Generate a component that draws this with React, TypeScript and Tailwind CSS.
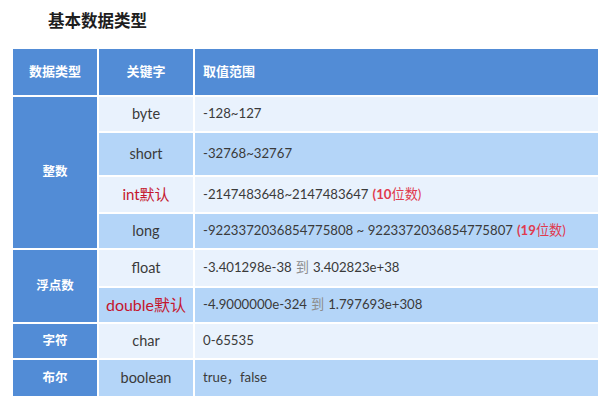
import React from 'react';

const font = { fontFamily: 'Lato, "Noto Sans CJK SC", sans-serif' };

const light = 'bg-[#e9f2fd]';
const mid = 'bg-[#b4d5f8]';

const Key: React.FC<{ bg: string; children: React.ReactNode; className?: string }> = ({ bg, children, className }) => (
  <div className={`${bg} flex items-center justify-center text-[14.5px] text-[#3a3a3a] ${className ?? ''}`}>{children}</div>
);

const Val: React.FC<{ bg: string; children: React.ReactNode }> = ({ bg, children }) => (
  <div className={`${bg} flex items-center pl-[8px] text-[13.2px] text-[#3a3a3a]`}>{children}</div>
);

const Group: React.FC<{ span: string; children: React.ReactNode }> = ({ span, children }) => (
  <div className={`${span} bg-[#528cd6] flex items-center justify-center text-[12.5px] font-bold text-white`}>{children}</div>
);

const To = () => <span className="mx-[4px] text-[#8c8c8c]">到</span>;

const App: React.FC = () => {
  return (
    <div className="w-[601px] h-[396px] bg-white overflow-hidden" style={font}>
      {/* Title */}
      <div className="pl-[48px] pt-[10px] text-[16.5px] leading-[22px] font-bold text-[#1e1e1e]">基本数据类型</div>

      {/* Table */}
      <div className="mt-[17px] ml-[13px] w-[585px] grid grid-cols-[84px_94px_1fr] grid-rows-[46px_34px_42px_35px_34px_36px_34px_34px_36px] gap-[2px] bg-white">
        <div className="bg-[#528cd6] flex items-center justify-center text-[13px] font-bold text-white">数据类型</div>
        <div className="bg-[#528cd6] flex items-center justify-center text-[13px] font-bold text-white">关键字</div>
        <div className="bg-[#528cd6] flex items-center pl-[8px] text-[13px] font-bold text-white">取值范围</div>

        <Group span="row-span-4">整数</Group>
        <Key bg={light}>byte</Key>
        <Val bg={light}>-128~127</Val>
        <Key bg={mid}>short</Key>
        <Val bg={mid}>-32768~32767</Val>
        <Key bg={light} className="text-[15px] text-[#c4162d]">int默认</Key>
        <Val bg={light}>
          -2147483648~2147483647
          <span className="ml-[4px] text-[#e03a4e]"><span className="font-bold">(10</span>位数)</span>
        </Val>
        <Key bg={mid}>long</Key>
        <Val bg={mid}>
          -9223372036854775808 ~ 9223372036854775807
          <span className="ml-[4px] text-[#e03a4e]"><span className="font-bold">(19</span>位数)</span>
        </Val>

        <Group span="row-span-2">浮点数</Group>
        <Key bg={light}>float</Key>
        <Val bg={light}>-3.401298e-38<To />3.402823e+38</Val>
        <Key bg={mid} className="text-[16px] text-[#c4162d]">double默认</Key>
        <Val bg={mid}>-4.9000000e-324<To />1.797693e+308</Val>

        <Group span="row-span-1">字符</Group>
        <Key bg={light}>char</Key>
        <Val bg={light}>0-65535</Val>

        <Group span="row-span-1">布尔</Group>
        <Key bg={mid}>boolean</Key>
        <Val bg={mid}>true，false</Val>
      </div>
    </div>
  );
};

export default App;
